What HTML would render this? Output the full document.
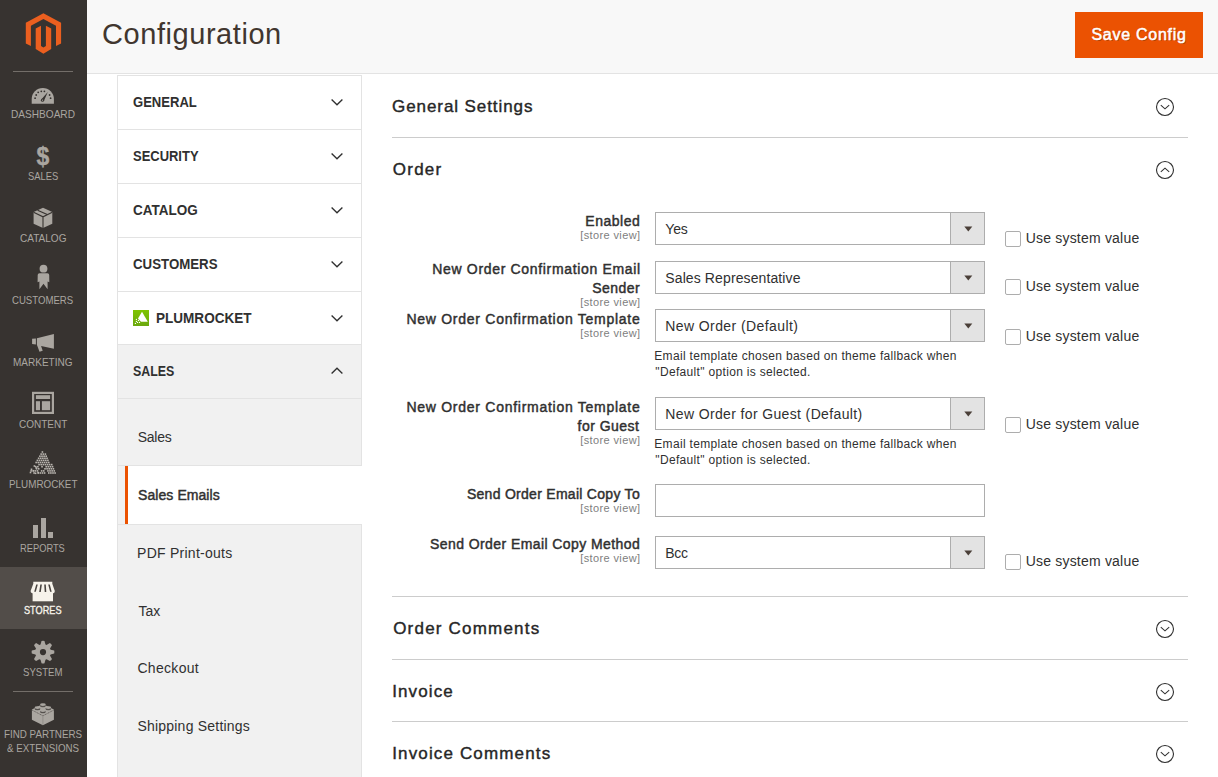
<!DOCTYPE html>
<html><head><meta charset="utf-8"><title>Configuration</title>
<style>
html,body{margin:0;padding:0;width:1218px;height:777px;overflow:hidden;background:#fff;}
body{position:relative;font-family:"Liberation Sans", sans-serif;}
.t{position:absolute;white-space:nowrap;font-family:"Liberation Sans", sans-serif;}
.b{position:absolute;}
</style></head><body>
<div class="b" style="left:0px;top:0px;width:87px;height:777px;background:#373330;"></div>
<svg class="b" style="left:24px;top:12px" width="40" height="44" viewBox="24 12 40 44">
<polygon fill="#eb5f1f" points="43.4,13.2 61.1,22.8 61.1,43.6 56,46 56,25.7 43.4,19 30.9,25.7 30.9,46 25.8,43.6 25.8,22.8"/>
<polygon fill="#eb5f1f" points="35.7,28.6 41,25.7 41,46 43.4,47.4 45.9,46 45.9,25.7 51.2,28.6 51.2,48.9 43.4,53.7 35.7,48.9"/>
</svg>
<div class="b" style="left:13px;top:71px;width:60px;height:1px;background:#736e69;"></div>
<div class="b" style="left:0px;top:567px;width:87px;height:62px;background:#524d49;"></div>
<div class="b" style="left:13px;top:691px;width:60px;height:1px;background:#736e69;"></div>
<div class="t" style="left:10.88px;top:109.00px;font-size:11px;line-height:11px;color:#aaa6a0;transform:scaleX(0.9176);transform-origin:0 0;">DASHBOARD</div>
<div class="t" style="left:27.55px;top:171.00px;font-size:11px;line-height:11px;color:#aaa6a0;transform:scaleX(0.8529);transform-origin:0 0;">SALES</div>
<div class="t" style="left:19.69px;top:233.00px;font-size:11px;line-height:11px;color:#aaa6a0;transform:scaleX(0.9122);transform-origin:0 0;">CATALOG</div>
<div class="t" style="left:12.03px;top:295.00px;font-size:11px;line-height:11px;color:#aaa6a0;transform:scaleX(0.8725);transform-origin:0 0;">CUSTOMERS</div>
<div class="t" style="left:13.09px;top:357.00px;font-size:11px;line-height:11px;color:#aaa6a0;transform:scaleX(0.9094);transform-origin:0 0;">MARKETING</div>
<div class="t" style="left:18.59px;top:419.00px;font-size:11px;line-height:11px;color:#aaa6a0;transform:scaleX(0.9096);transform-origin:0 0;">CONTENT</div>
<div class="t" style="left:8.70px;top:479.00px;font-size:11px;line-height:11px;color:#aaa6a0;transform:scaleX(0.896);transform-origin:0 0;">PLUMROCKET</div>
<div class="t" style="left:20.05px;top:543.00px;font-size:11px;line-height:11px;color:#aaa6a0;transform:scaleX(0.8462);transform-origin:0 0;">REPORTS</div>
<div class="t" style="left:24.00px;top:605.00px;font-size:11px;line-height:11px;color:#f7f3eb;font-weight:normal;-webkit-text-stroke:0.35px currentColor;transform:scaleX(0.8333);transform-origin:0 0;">STORES</div>
<div class="t" style="left:23.13px;top:667.00px;font-size:11px;line-height:11px;color:#aaa6a0;transform:scaleX(0.8721);transform-origin:0 0;">SYSTEM</div>
<div class="t" style="left:3.81px;top:729.00px;font-size:11px;line-height:11px;color:#aaa6a0;transform:scaleX(0.8919);transform-origin:0 0;">FIND PARTNERS</div>
<div class="t" style="left:6.90px;top:743.00px;font-size:11px;line-height:11px;color:#aaa6a0;transform:scaleX(0.8864);transform-origin:0 0;">&amp; EXTENSIONS</div>
<svg class="b" style="left:30px;top:86px" width="26" height="20" viewBox="30 86 26 20">
<path fill="#aaa6a0" d="M31.7,103.8 L31.7,99 A11.1,11.1 0 0 1 53.9,99 L53.9,103.8 Z"/>
<g fill="#373330"><circle cx="35.1" cy="98.2" r="0.9"/><circle cx="36.2" cy="95" r="0.9"/><circle cx="38.2" cy="92.3" r="0.9"/><circle cx="41.3" cy="91.3" r="0.9"/><circle cx="44.4" cy="91.3" r="0.9"/><circle cx="49.6" cy="95" r="0.9"/><circle cx="50.6" cy="98.2" r="0.9"/>
<path d="M41.3,99.6 L47.8,92 L43.9,100.9 Z"/><circle cx="42.5" cy="100.2" r="1.6"/></g><circle cx="42.5" cy="100.2" r="0.6" fill="#aaa6a0"/>
</svg>
<div class="b" style="left:30px;top:142px;width:26px;text-align:center;font-family:Liberation Sans;font-weight:bold;font-size:25px;line-height:29px;color:#aaa6a0;transform:scaleX(0.92);-webkit-text-stroke:0.4px #aaa6a0">$</div>
<svg class="b" style="left:32px;top:206px" width="24" height="24" viewBox="32 206 24 24">
<path fill="#aaa6a0" d="M43,207.7 L52.3,212 L52.3,223.8 L43,228.1 L33.6,223.8 L33.6,212 Z"/>
<path fill="none" stroke="#373330" stroke-width="1.1" d="M33.6,212.3 L43,216.8 L52.3,212.3 M43,216.8 L43,228"/>
<path fill="none" stroke="#373330" stroke-width="1.1" d="M37.6,210.2 L47.2,214.6"/>
</svg>
<svg class="b" style="left:35px;top:263px" width="18" height="28" viewBox="35 263 18 28">
<circle fill="#aaa6a0" cx="43.5" cy="268.7" r="3.9"/>
<path fill="#aaa6a0" d="M37.7,275 Q37.7,273.2 39.5,273.2 L47.4,273.2 Q49.2,273.2 49.2,275 L49.3,282.2 L47.6,281.4 L47.6,289.2 L43.5,283.8 L39.4,289.2 L39.4,281.4 L37.6,282.2 Z"/>
</svg>
<svg class="b" style="left:30px;top:332px" width="26" height="22" viewBox="30 332 26 22">
<path fill="#aaa6a0" d="M32.1,338.8 L35.9,338.4 L35.9,344.4 L32.1,343.9 Z"/>
<path fill="#aaa6a0" d="M36.9,338.2 L53.9,334 L53.9,348.8 L41.1,346 L42.7,350.8 L39.5,351.8 L36.9,344.8 Z"/>
</svg>
<svg class="b" style="left:31px;top:390px" width="25" height="25" viewBox="31 390 25 25">
<rect x="33.1" y="392.9" width="19.8" height="20" fill="none" stroke="#aaa6a0" stroke-width="2.2"/>
<rect x="35.9" y="395.2" width="14.2" height="3.8" fill="#aaa6a0"/>
<rect x="35.9" y="401.2" width="4.1" height="9" fill="#aaa6a0"/>
<rect x="41.9" y="401.2" width="8.2" height="9" fill="#aaa6a0"/>
</svg>
<svg class="b" style="left:27px;top:449px" width="33" height="27" viewBox="27 449 33 27"><g fill="#bab6b0"><rect x="41.60" y="451.20" width="1.6" height="1.6"/><rect x="40.35" y="453.30" width="1.6" height="1.6"/><rect x="42.45" y="453.30" width="1.6" height="1.6"/><rect x="44.55" y="453.30" width="1.6" height="1.6"/><rect x="39.10" y="455.40" width="1.6" height="1.6"/><rect x="41.20" y="455.40" width="1.6" height="1.6"/><rect x="43.30" y="455.40" width="1.6" height="1.6"/><rect x="45.40" y="455.40" width="1.6" height="1.6"/><rect x="37.85" y="457.50" width="1.6" height="1.6"/><rect x="39.95" y="457.50" width="1.6" height="1.6"/><rect x="42.05" y="457.50" width="1.6" height="1.6"/><rect x="44.15" y="457.50" width="1.6" height="1.6"/><rect x="46.25" y="457.50" width="1.6" height="1.6"/><rect x="36.60" y="459.60" width="1.6" height="1.6"/><rect x="38.70" y="459.60" width="1.6" height="1.6"/><rect x="40.80" y="459.60" width="1.6" height="1.6"/><rect x="42.90" y="459.60" width="1.6" height="1.6"/><rect x="45.00" y="459.60" width="1.6" height="1.6"/><rect x="47.10" y="459.60" width="1.6" height="1.6"/><rect x="35.35" y="461.70" width="1.6" height="1.6"/><rect x="37.45" y="461.70" width="1.6" height="1.6"/><rect x="39.55" y="461.70" width="1.6" height="1.6"/><rect x="41.65" y="461.70" width="1.6" height="1.6"/><rect x="43.75" y="461.70" width="1.6" height="1.6"/><rect x="45.85" y="461.70" width="1.6" height="1.6"/><rect x="47.95" y="461.70" width="1.6" height="1.6"/><rect x="38.30" y="463.80" width="1.6" height="1.6"/><rect x="40.40" y="463.80" width="1.6" height="1.6"/><rect x="42.50" y="463.80" width="1.6" height="1.6"/><rect x="44.60" y="463.80" width="1.6" height="1.6"/><rect x="46.70" y="463.80" width="1.6" height="1.6"/><rect x="48.80" y="463.80" width="1.6" height="1.6"/><rect x="50.90" y="463.80" width="1.6" height="1.6"/><rect x="34.95" y="465.90" width="1.6" height="1.6"/><rect x="37.05" y="465.90" width="1.6" height="1.6"/><rect x="41.25" y="465.90" width="1.6" height="1.6"/><rect x="45.45" y="465.90" width="1.6" height="1.6"/><rect x="47.55" y="465.90" width="1.6" height="1.6"/><rect x="49.65" y="465.90" width="1.6" height="1.6"/><rect x="51.75" y="465.90" width="1.6" height="1.6"/><rect x="35.80" y="468.00" width="1.6" height="1.6"/><rect x="37.90" y="468.00" width="1.6" height="1.6"/><rect x="44.20" y="468.00" width="1.6" height="1.6"/><rect x="46.30" y="468.00" width="1.6" height="1.6"/><rect x="48.40" y="468.00" width="1.6" height="1.6"/><rect x="50.50" y="468.00" width="1.6" height="1.6"/><rect x="52.60" y="468.00" width="1.6" height="1.6"/><rect x="30.35" y="470.10" width="1.6" height="1.6"/><rect x="32.45" y="470.10" width="1.6" height="1.6"/><rect x="34.55" y="470.10" width="1.6" height="1.6"/><rect x="36.65" y="470.10" width="1.6" height="1.6"/><rect x="40.85" y="470.10" width="1.6" height="1.6"/><rect x="42.95" y="470.10" width="1.6" height="1.6"/><rect x="47.15" y="470.10" width="1.6" height="1.6"/><rect x="49.25" y="470.10" width="1.6" height="1.6"/><rect x="51.35" y="470.10" width="1.6" height="1.6"/><rect x="53.45" y="470.10" width="1.6" height="1.6"/><rect x="33.30" y="472.20" width="1.6" height="1.6"/><rect x="37.50" y="472.20" width="1.6" height="1.6"/><rect x="39.60" y="472.20" width="1.6" height="1.6"/><rect x="41.70" y="472.20" width="1.6" height="1.6"/><rect x="43.80" y="472.20" width="1.6" height="1.6"/><rect x="48.00" y="472.20" width="1.6" height="1.6"/><rect x="50.10" y="472.20" width="1.6" height="1.6"/><rect x="52.20" y="472.20" width="1.6" height="1.6"/><rect x="54.30" y="472.20" width="1.6" height="1.6"/><rect x="29.70" y="471.70" width="1.6" height="1.6"/><rect x="30.70" y="468.50" width="1.6" height="1.6"/><rect x="32.70" y="469.90" width="1.6" height="1.6"/><rect x="34.80" y="472.50" width="1.6" height="1.6"/><rect x="35.50" y="467.20" width="1.6" height="1.6"/><rect x="33.60" y="465.20" width="1.6" height="1.6"/><rect x="37.40" y="471.80" width="1.6" height="1.6"/></g></svg>
<div class="b" style="left:33.2px;top:524.7px;width:4.7px;height:13.7px;background:#aaa6a0;"></div>
<div class="b" style="left:41px;top:518px;width:4.6px;height:20.4px;background:#aaa6a0;"></div>
<div class="b" style="left:47.9px;top:531.5px;width:5.1px;height:6.9px;background:#aaa6a0;"></div>
<svg class="b" style="left:29px;top:580px" width="28" height="23" viewBox="29 580 28 23">
<path fill="#f7f3eb" d="M33.3,581.8 L52.3,581.8 L52.3,583.7 L54.8,591 Q54.9,592.9 53.3,593.2 L32.3,593.2 Q30.5,592.9 30.6,591 L33.3,583.7 Z"/>
<path fill="#4a4541" d="M36.2,584.4 L37.8,584.4 L35.8,591.8 L34.2,591.8 Z M40.3,584.4 L41.9,584.4 L40.8,591.9 L39.2,591.9 Z M44.2,584.4 L45.8,584.4 L46.3,591.9 L44.7,591.9 Z M48.2,584.4 L49.8,584.4 L51.7,591.8 L50.1,591.8 Z"/>
<path fill="#f7f3eb" d="M32.6,593 L53,593 L53,601.3 L32.6,601.3 Z"/>
</svg>
<svg class="b" style="left:30px;top:639px" width="26" height="27" viewBox="30 639 26 27"><g fill="#aaa6a0"><path d="M40.3,645.5 L41.5,640.9 Q43,640.5 44.5,640.9 L45.7,645.5 Z" transform="rotate(0 43 652.1)"/><path d="M40.3,645.5 L41.5,640.9 Q43,640.5 44.5,640.9 L45.7,645.5 Z" transform="rotate(45 43 652.1)"/><path d="M40.3,645.5 L41.5,640.9 Q43,640.5 44.5,640.9 L45.7,645.5 Z" transform="rotate(90 43 652.1)"/><path d="M40.3,645.5 L41.5,640.9 Q43,640.5 44.5,640.9 L45.7,645.5 Z" transform="rotate(135 43 652.1)"/><path d="M40.3,645.5 L41.5,640.9 Q43,640.5 44.5,640.9 L45.7,645.5 Z" transform="rotate(180 43 652.1)"/><path d="M40.3,645.5 L41.5,640.9 Q43,640.5 44.5,640.9 L45.7,645.5 Z" transform="rotate(225 43 652.1)"/><path d="M40.3,645.5 L41.5,640.9 Q43,640.5 44.5,640.9 L45.7,645.5 Z" transform="rotate(270 43 652.1)"/><path d="M40.3,645.5 L41.5,640.9 Q43,640.5 44.5,640.9 L45.7,645.5 Z" transform="rotate(315 43 652.1)"/><circle cx="43" cy="652.1" r="7.9"/></g><circle cx="43" cy="652.1" r="3.1" fill="#373330"/></svg>
<svg class="b" style="left:30px;top:700px" width="27" height="28" viewBox="30 700 27 28">
<path fill="#aaa6a0" d="M31.9,709.6 L42.9,704 L53.9,709.6 L53.9,719.7 L42.9,725.2 L31.9,719.7 Z"/>
<path fill="none" stroke="#373330" stroke-width="0.7" opacity="0.8" stroke-dasharray="1.2,0.6" d="M32.1,710.1 L42.9,715.8 L53.7,710.1"/>
<path fill="none" stroke="#8f8b86" stroke-width="0.9" d="M42.9,716 L42.9,725"/>
<ellipse cx="42.9" cy="705.7" rx="2.9" ry="1.5" fill="#373330" opacity="0.75"/><ellipse cx="42.9" cy="704.6" rx="2.9" ry="1.45" fill="#aaa6a0"/><ellipse cx="37.5" cy="708.7" rx="2.9" ry="1.5" fill="#373330" opacity="0.75"/><ellipse cx="37.5" cy="707.6" rx="2.9" ry="1.45" fill="#aaa6a0"/><ellipse cx="48.3" cy="708.7" rx="2.9" ry="1.5" fill="#373330" opacity="0.75"/><ellipse cx="48.3" cy="707.6" rx="2.9" ry="1.45" fill="#aaa6a0"/><ellipse cx="42.9" cy="711.7" rx="2.9" ry="1.5" fill="#373330" opacity="0.75"/><ellipse cx="42.9" cy="710.6" rx="2.9" ry="1.45" fill="#aaa6a0"/>
</svg>
<div class="b" style="left:87px;top:0px;width:1131px;height:73px;background:#f8f8f8;"></div>
<div class="b" style="left:87px;top:73px;width:1131px;height:1px;background:#e3e3e3;"></div>
<div class="t" style="left:102.10px;top:20.00px;font-size:29px;line-height:29px;color:#41362f;letter-spacing:0.55px;">Configuration</div>
<div class="b" style="left:1075px;top:12px;width:128px;height:46px;background:#eb5202;"></div>
<div class="t" style="left:1091.40px;top:27.00px;font-size:16px;line-height:16px;color:#ffffff;font-weight:normal;-webkit-text-stroke:0.5px currentColor;letter-spacing:0.74px;text-shadow:1px 1px 0 rgba(0,0,0,0.25);">Save Config</div>
<div class="b" style="left:117px;top:75px;width:245px;height:702px;background:#ffffff;border:1px solid #e3e3e3;box-sizing:border-box;"></div>
<div class="b" style="left:118px;top:344px;width:243px;height:433px;background:#f1f1f1;"></div>
<div class="b" style="left:118px;top:129px;width:243px;height:1px;background:#e3e3e3;"></div>
<div class="b" style="left:118px;top:183px;width:243px;height:1px;background:#e3e3e3;"></div>
<div class="b" style="left:118px;top:237px;width:243px;height:1px;background:#e3e3e3;"></div>
<div class="b" style="left:118px;top:291px;width:243px;height:1px;background:#e3e3e3;"></div>
<div class="b" style="left:118px;top:344px;width:243px;height:1px;background:#e3e3e3;"></div>
<div class="b" style="left:118px;top:398px;width:243px;height:1px;background:#e3e3e3;"></div>
<div class="t" style="left:132.97px;top:95.00px;font-size:14px;line-height:14px;color:#303030;font-weight:bold;transform:scaleX(0.9328);transform-origin:0 0;">GENERAL</div>
<div class="t" style="left:132.57px;top:149.00px;font-size:14px;line-height:14px;color:#303030;font-weight:bold;transform:scaleX(0.9257);transform-origin:0 0;">SECURITY</div>
<div class="t" style="left:132.54px;top:203.00px;font-size:14px;line-height:14px;color:#303030;font-weight:bold;transform:scaleX(0.9646);transform-origin:0 0;">CATALOG</div>
<div class="t" style="left:132.55px;top:257.00px;font-size:14px;line-height:14px;color:#303030;font-weight:bold;transform:scaleX(0.9477);transform-origin:0 0;">CUSTOMERS</div>
<div class="t" style="left:156.03px;top:311.00px;font-size:14px;line-height:14px;color:#303030;font-weight:bold;transform:scaleX(0.9673);transform-origin:0 0;">PLUMROCKET</div>
<div class="t" style="left:132.62px;top:364.00px;font-size:14px;line-height:14px;color:#303030;font-weight:bold;transform:scaleX(0.8844);transform-origin:0 0;">SALES</div>
<svg class="b" style="left:328.7px;top:94px" width="16" height="16" viewBox="328.7 94 16 16"><path d="M331.3,99.4 L336.7,104.7 L342.09999999999997,99.4" fill="none" stroke="#303030" stroke-width="1.35"/></svg>
<svg class="b" style="left:328.7px;top:148px" width="16" height="16" viewBox="328.7 148 16 16"><path d="M331.3,153.4 L336.7,158.7 L342.09999999999997,153.4" fill="none" stroke="#303030" stroke-width="1.35"/></svg>
<svg class="b" style="left:328.7px;top:202px" width="16" height="16" viewBox="328.7 202 16 16"><path d="M331.3,207.4 L336.7,212.7 L342.09999999999997,207.4" fill="none" stroke="#303030" stroke-width="1.35"/></svg>
<svg class="b" style="left:328.7px;top:256px" width="16" height="16" viewBox="328.7 256 16 16"><path d="M331.3,261.4 L336.7,266.7 L342.09999999999997,261.4" fill="none" stroke="#303030" stroke-width="1.35"/></svg>
<svg class="b" style="left:328.7px;top:310.2px" width="16" height="16" viewBox="328.7 310.2 16 16"><path d="M331.3,315.59999999999997 L336.7,320.9 L342.09999999999997,315.59999999999997" fill="none" stroke="#303030" stroke-width="1.35"/></svg>
<svg class="b" style="left:328.7px;top:363px" width="16" height="16" viewBox="328.7 363 16 16"><path d="M331.3,373.6 L336.7,368.3 L342.09999999999997,373.6" fill="none" stroke="#303030" stroke-width="1.35"/></svg>
<svg class="b" style="left:133px;top:310px" width="16" height="16" viewBox="0 0 16 16">
<defs><linearGradient id="pg" x1="0" y1="0" x2="0" y2="1"><stop offset="0" stop-color="#7fc400"/><stop offset="1" stop-color="#6aa80e"/></linearGradient></defs>
<rect width="16" height="16" fill="url(#pg)"/>
<path d="M9,1.8 L14.8,11.7 L8,11.7 L5,8.6 Z" fill="#ffffff"/>
<g fill="#ffffff"><circle cx="3.4" cy="9.4" r="0.65"/><circle cx="5.5" cy="10.4" r="0.65"/><circle cx="3.4" cy="11.4" r="0.65"/><circle cx="4.5" cy="12.4" r="0.65"/><circle cx="6.5" cy="12.4" r="0.65"/><circle cx="2.4" cy="13.4" r="0.65"/></g>
</svg>
<div class="b" style="left:118px;top:465px;width:243px;height:1px;background:#e3e3e3;"></div>
<div class="b" style="left:118px;top:524px;width:243px;height:1px;background:#e3e3e3;"></div>
<div class="b" style="left:125px;top:466px;width:245px;height:58px;background:#ffffff;"></div>
<div class="b" style="left:125px;top:466px;width:3px;height:58px;background:#eb5202;"></div>
<div class="t" style="left:137.70px;top:430.00px;font-size:14px;line-height:14px;color:#303030;letter-spacing:-0.25px;">Sales</div>
<div class="t" style="left:138.10px;top:488.00px;font-size:14px;line-height:14px;color:#303030;font-weight:normal;-webkit-text-stroke:0.45px currentColor;letter-spacing:0.064px;">Sales Emails</div>
<div class="t" style="left:137.10px;top:546.00px;font-size:14px;line-height:14px;color:#303030;letter-spacing:0.254px;">PDF Print-outs</div>
<div class="t" style="left:138.40px;top:604.00px;font-size:14px;line-height:14px;color:#303030;">Tax</div>
<div class="t" style="left:137.40px;top:661.00px;font-size:14px;line-height:14px;color:#303030;letter-spacing:0.314px;">Checkout</div>
<div class="t" style="left:137.40px;top:719.00px;font-size:14px;line-height:14px;color:#303030;letter-spacing:0.219px;">Shipping Settings</div>
<div class="t" style="left:392.10px;top:98.00px;font-size:17px;line-height:17px;color:#262626;font-weight:normal;-webkit-text-stroke:0.4px currentColor;letter-spacing:0.913px;">General Settings</div>
<svg class="b" style="left:1154.4px;top:96px" width="22" height="22" viewBox="1154.4 96 22 22"><circle cx="1165.4" cy="107" r="8.5" fill="none" stroke="#303030" stroke-width="1.1"/><path d="M1161.2,105.2 L1165.4,108.8 L1169.6000000000001,105.2" fill="none" stroke="#303030" stroke-width="1.05"/></svg>
<div class="b" style="left:392px;top:137px;width:796px;height:1px;background:#cccccc;"></div>
<div class="t" style="left:392.80px;top:161.00px;font-size:17px;line-height:17px;color:#262626;font-weight:normal;-webkit-text-stroke:0.4px currentColor;letter-spacing:1.225px;">Order</div>
<svg class="b" style="left:1154.4px;top:159px" width="22" height="22" viewBox="1154.4 159 22 22"><circle cx="1165.4" cy="170" r="8.5" fill="none" stroke="#303030" stroke-width="1.1"/><path d="M1161.2,171.8 L1165.4,168.2 L1169.6000000000001,171.8" fill="none" stroke="#303030" stroke-width="1.05"/></svg>
<div class="t" style="left:585.30px;top:214.00px;font-size:14px;line-height:14px;color:#303030;font-weight:normal;-webkit-text-stroke:0.45px currentColor;letter-spacing:0.517px;">Enabled</div>
<div class="t" style="left:580.30px;top:230.00px;font-size:11px;line-height:11px;color:#808080;letter-spacing:0.373px;">[store view]</div>
<div class="b" style="left:655px;top:212px;width:330px;height:33px;background:#fff;border:1px solid #adadad;box-sizing:border-box;"></div>
<div class="b" style="left:950px;top:212px;width:35px;height:33px;background:#e3e3e3;border:1px solid #adadad;box-sizing:border-box;"></div>
<svg class="b" style="left:963.8px;top:225.9px" width="9" height="7" viewBox="0 0 9 7"><path d="M0.3,0.5 L8.3,0.5 L4.3,5.5 Z" fill="#4a3f38"/></svg>
<div class="t" style="left:665.30px;top:222.00px;font-size:14px;line-height:14px;color:#303030;letter-spacing:-0.2px;">Yes</div>
<div class="b" style="left:1005px;top:231px;width:16px;height:16px;background:#fff;border:1px solid #adadad;border-radius:2px;box-sizing:border-box;"></div>
<div class="t" style="left:1025.70px;top:231.00px;font-size:14px;line-height:14px;color:#303030;letter-spacing:0.2px;">Use system value</div>
<div class="t" style="left:432.30px;top:262.00px;font-size:14px;line-height:14px;color:#303030;font-weight:normal;-webkit-text-stroke:0.45px currentColor;letter-spacing:0.67px;">New Order Confirmation Email</div>
<div class="t" style="left:592.30px;top:281.00px;font-size:14px;line-height:14px;color:#303030;font-weight:normal;-webkit-text-stroke:0.45px currentColor;letter-spacing:0.42px;">Sender</div>
<div class="t" style="left:580.30px;top:297.00px;font-size:11px;line-height:11px;color:#808080;letter-spacing:0.373px;">[store view]</div>
<div class="b" style="left:655px;top:261px;width:330px;height:33px;background:#fff;border:1px solid #adadad;box-sizing:border-box;"></div>
<div class="b" style="left:950px;top:261px;width:35px;height:33px;background:#e3e3e3;border:1px solid #adadad;box-sizing:border-box;"></div>
<svg class="b" style="left:963.8px;top:274.9px" width="9" height="7" viewBox="0 0 9 7"><path d="M0.3,0.5 L8.3,0.5 L4.3,5.5 Z" fill="#4a3f38"/></svg>
<div class="t" style="left:665.30px;top:271.00px;font-size:14px;line-height:14px;color:#303030;letter-spacing:0.111px;">Sales Representative</div>
<div class="b" style="left:1005px;top:279px;width:16px;height:16px;background:#fff;border:1px solid #adadad;border-radius:2px;box-sizing:border-box;"></div>
<div class="t" style="left:1025.70px;top:279.00px;font-size:14px;line-height:14px;color:#303030;letter-spacing:0.2px;">Use system value</div>
<div class="t" style="left:406.40px;top:312.00px;font-size:14px;line-height:14px;color:#303030;font-weight:normal;-webkit-text-stroke:0.45px currentColor;letter-spacing:0.733px;">New Order Confirmation Template</div>
<div class="t" style="left:580.30px;top:328.00px;font-size:11px;line-height:11px;color:#808080;letter-spacing:0.373px;">[store view]</div>
<div class="b" style="left:655px;top:309px;width:330px;height:33px;background:#fff;border:1px solid #adadad;box-sizing:border-box;"></div>
<div class="b" style="left:950px;top:309px;width:35px;height:33px;background:#e3e3e3;border:1px solid #adadad;box-sizing:border-box;"></div>
<svg class="b" style="left:963.8px;top:322.9px" width="9" height="7" viewBox="0 0 9 7"><path d="M0.3,0.5 L8.3,0.5 L4.3,5.5 Z" fill="#4a3f38"/></svg>
<div class="t" style="left:665.30px;top:319.00px;font-size:14px;line-height:14px;color:#303030;letter-spacing:0.406px;">New Order (Default)</div>
<div class="b" style="left:1005px;top:329px;width:16px;height:16px;background:#fff;border:1px solid #adadad;border-radius:2px;box-sizing:border-box;"></div>
<div class="t" style="left:1025.70px;top:329.00px;font-size:14px;line-height:14px;color:#303030;letter-spacing:0.2px;">Use system value</div>
<div class="t" style="left:654.30px;top:350.00px;font-size:12px;line-height:12px;color:#303030;letter-spacing:0.312px;">Email template chosen based on theme fallback when</div>
<div class="t" style="left:655.30px;top:366.00px;font-size:12px;line-height:12px;color:#303030;letter-spacing:0.329px;">&quot;Default&quot; option is selected.</div>
<div class="t" style="left:406.40px;top:400.00px;font-size:14px;line-height:14px;color:#303030;font-weight:normal;-webkit-text-stroke:0.45px currentColor;letter-spacing:0.733px;">New Order Confirmation Template</div>
<div class="t" style="left:577.50px;top:419.00px;font-size:14px;line-height:14px;color:#303030;font-weight:normal;-webkit-text-stroke:0.45px currentColor;letter-spacing:0.487px;">for Guest</div>
<div class="t" style="left:580.30px;top:435.00px;font-size:11px;line-height:11px;color:#808080;letter-spacing:0.373px;">[store view]</div>
<div class="b" style="left:655px;top:397px;width:330px;height:33px;background:#fff;border:1px solid #adadad;box-sizing:border-box;"></div>
<div class="b" style="left:950px;top:397px;width:35px;height:33px;background:#e3e3e3;border:1px solid #adadad;box-sizing:border-box;"></div>
<svg class="b" style="left:963.8px;top:410.9px" width="9" height="7" viewBox="0 0 9 7"><path d="M0.3,0.5 L8.3,0.5 L4.3,5.5 Z" fill="#4a3f38"/></svg>
<div class="t" style="left:665.30px;top:407.00px;font-size:14px;line-height:14px;color:#303030;letter-spacing:0.364px;">New Order for Guest (Default)</div>
<div class="b" style="left:1005px;top:417px;width:16px;height:16px;background:#fff;border:1px solid #adadad;border-radius:2px;box-sizing:border-box;"></div>
<div class="t" style="left:1025.70px;top:417.00px;font-size:14px;line-height:14px;color:#303030;letter-spacing:0.2px;">Use system value</div>
<div class="t" style="left:654.30px;top:438.00px;font-size:12px;line-height:12px;color:#303030;letter-spacing:0.312px;">Email template chosen based on theme fallback when</div>
<div class="t" style="left:655.30px;top:454.00px;font-size:12px;line-height:12px;color:#303030;letter-spacing:0.329px;">&quot;Default&quot; option is selected.</div>
<div class="t" style="left:466.90px;top:487.00px;font-size:14px;line-height:14px;color:#303030;font-weight:normal;-webkit-text-stroke:0.45px currentColor;letter-spacing:0.283px;">Send Order Email Copy To</div>
<div class="t" style="left:580.30px;top:503.00px;font-size:11px;line-height:11px;color:#808080;letter-spacing:0.373px;">[store view]</div>
<div class="b" style="left:655px;top:484px;width:330px;height:33px;background:#fff;border:1px solid #adadad;box-sizing:border-box;"></div>
<div class="t" style="left:430.00px;top:537.00px;font-size:14px;line-height:14px;color:#303030;font-weight:normal;-webkit-text-stroke:0.45px currentColor;letter-spacing:0.422px;">Send Order Email Copy Method</div>
<div class="t" style="left:580.30px;top:553.00px;font-size:11px;line-height:11px;color:#808080;letter-spacing:0.373px;">[store view]</div>
<div class="b" style="left:655px;top:536px;width:330px;height:33px;background:#fff;border:1px solid #adadad;box-sizing:border-box;"></div>
<div class="b" style="left:950px;top:536px;width:35px;height:33px;background:#e3e3e3;border:1px solid #adadad;box-sizing:border-box;"></div>
<svg class="b" style="left:963.8px;top:549.9px" width="9" height="7" viewBox="0 0 9 7"><path d="M0.3,0.5 L8.3,0.5 L4.3,5.5 Z" fill="#4a3f38"/></svg>
<div class="t" style="left:665.30px;top:546.00px;font-size:14px;line-height:14px;color:#303030;letter-spacing:-0.35px;">Bcc</div>
<div class="b" style="left:1005px;top:554px;width:16px;height:16px;background:#fff;border:1px solid #adadad;border-radius:2px;box-sizing:border-box;"></div>
<div class="t" style="left:1025.70px;top:554.00px;font-size:14px;line-height:14px;color:#303030;letter-spacing:0.2px;">Use system value</div>
<div class="b" style="left:392px;top:596px;width:796px;height:1px;background:#cccccc;"></div>
<div class="t" style="left:393.20px;top:620.00px;font-size:17px;line-height:17px;color:#262626;font-weight:normal;-webkit-text-stroke:0.4px currentColor;letter-spacing:1.2px;">Order Comments</div>
<svg class="b" style="left:1154.4px;top:618px" width="22" height="22" viewBox="1154.4 618 22 22"><circle cx="1165.4" cy="629" r="8.5" fill="none" stroke="#303030" stroke-width="1.1"/><path d="M1161.2,627.2 L1165.4,630.8 L1169.6000000000001,627.2" fill="none" stroke="#303030" stroke-width="1.05"/></svg>
<div class="b" style="left:392px;top:659px;width:796px;height:1px;background:#cccccc;"></div>
<div class="t" style="left:392.20px;top:683.00px;font-size:17px;line-height:17px;color:#262626;font-weight:normal;-webkit-text-stroke:0.4px currentColor;letter-spacing:1.117px;">Invoice</div>
<svg class="b" style="left:1154.4px;top:681px" width="22" height="22" viewBox="1154.4 681 22 22"><circle cx="1165.4" cy="692" r="8.5" fill="none" stroke="#303030" stroke-width="1.1"/><path d="M1161.2,690.2 L1165.4,693.8 L1169.6000000000001,690.2" fill="none" stroke="#303030" stroke-width="1.05"/></svg>
<div class="b" style="left:392px;top:721px;width:796px;height:1px;background:#cccccc;"></div>
<div class="t" style="left:392.20px;top:745.00px;font-size:17px;line-height:17px;color:#262626;font-weight:normal;-webkit-text-stroke:0.4px currentColor;letter-spacing:1.147px;">Invoice Comments</div>
<svg class="b" style="left:1154.4px;top:743px" width="22" height="22" viewBox="1154.4 743 22 22"><circle cx="1165.4" cy="754" r="8.5" fill="none" stroke="#303030" stroke-width="1.1"/><path d="M1161.2,752.2 L1165.4,755.8 L1169.6000000000001,752.2" fill="none" stroke="#303030" stroke-width="1.05"/></svg>
</body></html>
